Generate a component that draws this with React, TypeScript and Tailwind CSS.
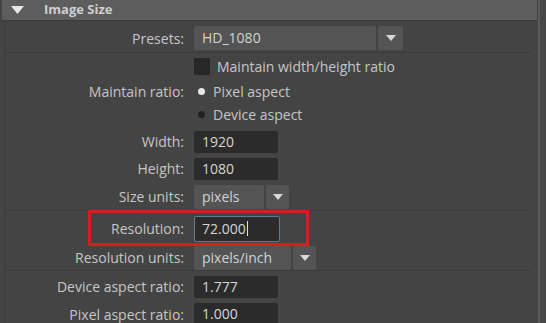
import React from "react";

const font = { fontFamily: '"Open Sans", "Noto Sans", sans-serif' };

function Arrow() {
  return (
    <svg width="10" height="6" viewBox="0 0 10 6">
      <path d="M0 0 H10 L5 6 Z" fill="#d8d8d8" />
    </svg>
  );
}

function Label({ text }: { text: string }) {
  return <div className="w-[184px] shrink-0 pr-[1px] text-right text-[#c6c6c6]">{text}</div>;
}

function Dropdown({ value, w, bw }: { value: string; w: string; bw: string }) {
  return (
    <div className="flex gap-[2px]">
      <div className={`${w} h-[24px] rounded-[2px] bg-[#545454] pl-[8px] leading-[24px] text-[#d2d2d2]`}>{value}</div>
      <div className={`${bw} h-[24px] rounded-[2px] bg-[#545454] flex items-center justify-center`}>
        <Arrow />
      </div>
    </div>
  );
}

function Field({ value }: { value: string }) {
  return (
    <div className="w-[84px] h-[22px] rounded-[2px] bg-[#2b2b2b] pl-[8px] leading-[22px] text-[#d6d6d6]">{value}</div>
  );
}

export default function App() {
  return (
    <div className="relative w-[546px] h-[323px] overflow-hidden bg-[#444444] flex text-[14px]" style={font}>
      <div className="flex-1 flex flex-col">
        <div className="ml-[2px] h-[21px] bg-[#5d5d5d] flex items-center border-b border-[#3a3a3a]">
          <div className="ml-[9px]">
            <svg width="13" height="8" viewBox="0 0 13 8">
              <path d="M0 0 H13 L6.5 8 Z" fill="#e8e8e8" />
            </svg>
          </div>
          <div className="ml-[20px] text-[13px] font-bold text-[#cfcfcf]">Image Size</div>
        </div>

        <div className="flex flex-col border-l border-[#3c3c3c] ml-[4px]">
          <div className="h-[31px] flex items-center -ml-[4px] pt-[4px]">
            <Label text="Presets:" />
            <div className="ml-[9px]">
              <Dropdown value="HD_1080" w="w-[182px]" bw="w-[25px]" />
            </div>
          </div>
          <div className="h-px bg-[#3b3b3b] mr-[6px]" />

          <div className="h-[27px] flex items-center -ml-[4px]">
            <div className="w-[193px] shrink-0" />
            <div className="w-[16px] h-[17px] bg-[#272727] rounded-[1px]" />
            <div className="ml-[7px] text-[#c6c6c6]">Maintain width/height ratio</div>
          </div>

          <div className="h-[24px] flex items-center -ml-[4px]">
            <Label text="Maintain ratio:" />
            <div className="ml-[13px] w-[7px] h-[7px] rounded-full bg-[#e6e6e6]" />
            <div className="ml-[8px] text-[#c6c6c6]">Pixel aspect</div>
          </div>

          <div className="h-[22px] flex items-center -ml-[4px]">
            <div className="w-[197px] shrink-0" />
            <div className="w-[7px] h-[7px] rounded-full bg-[#222222]" />
            <div className="ml-[8px] text-[#c6c6c6]">Device aspect</div>
          </div>

          <div className="h-[28px] flex items-center -ml-[4px] pt-[4px]">
            <Label text="Width:" />
            <div className="ml-[9px]"><Field value="1920" /></div>
          </div>

          <div className="h-[27px] flex items-center -ml-[4px] pt-[3px]">
            <Label text="Height:" />
            <div className="ml-[9px]"><Field value="1080" /></div>
          </div>

          <div className="h-[29px] flex items-center -ml-[4px] pt-[3px]">
            <Label text="Size units:" />
            <div className="ml-[9px]">
              <Dropdown value="pixels" w="w-[70px]" bw="w-[23px]" />
            </div>
          </div>
          <div className="h-px bg-[#3b3b3b] mr-[6px]" />

          <div className="h-[34px] flex items-center -ml-[4px] pt-[2px]">
            <Label text="Resolution:" />
            <div className="ml-[9px] w-[86px] h-[26px] rounded-[2px] bg-[#2b2b2b] border border-[#5e7d92] pl-[7px] flex items-center text-[#d6d6d6]">
              72.000<span className="ml-[1px] w-px h-[15px] bg-[#e0e0e0]" />
            </div>
          </div>

          <div className="h-[25px] flex items-center -ml-[4px] pt-[1px]">
            <Label text="Resolution units:" />
            <div className="ml-[9px]">
              <Dropdown value="pixels/inch" w="w-[97px]" bw="w-[23px]" />
            </div>
          </div>
          <div className="h-px bg-[#3b3b3b] mr-[6px]" />

          <div className="h-[29px] flex items-center -ml-[4px] pt-[3px]">
            <Label text="Device aspect ratio:" />
            <div className="ml-[9px]"><Field value="1.777" /></div>
          </div>

          <div className="h-[26px] flex items-center -ml-[4px] pt-[3px]">
            <Label text="Pixel aspect ratio:" />
            <div className="ml-[9px]"><Field value="1.000" /></div>
          </div>
        </div>
      </div>
      <div className="w-[2px] bg-[#5a5a5a] ml-[1px]" />
      <div className="w-[6px] bg-[#474747]" />

      <div className="absolute left-[88px] top-[210px] w-[221px] h-[36px] border-[3px] border-[#d41f1f]" />
    </div>
  );
}
